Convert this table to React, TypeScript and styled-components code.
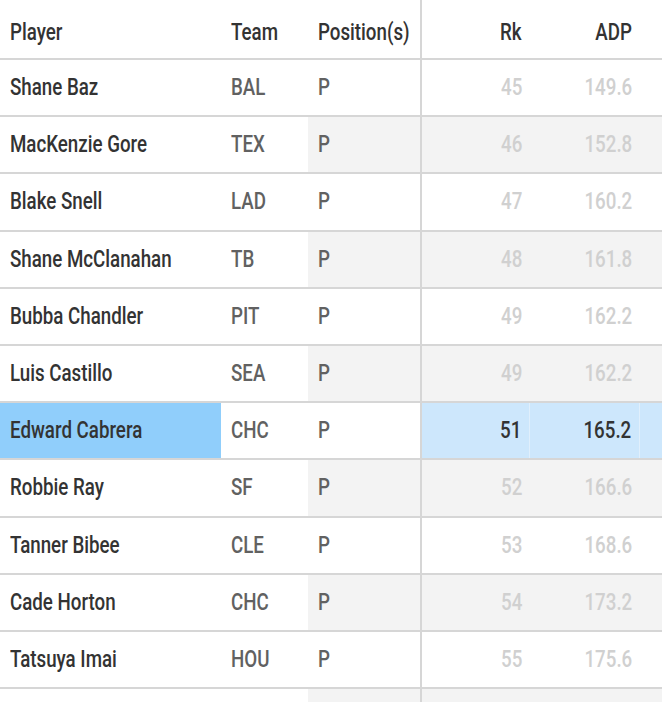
import React, {FC} from 'react';
import styled, {createGlobalStyle} from 'styled-components';

const GlobalStyle = createGlobalStyle`
  html, body {
    margin: 0;
    padding: 0;
    background: #ffffff;
  }

  body {
    font-family: "Roboto", "Liberation Sans", sans-serif;
    overflow: hidden;
  }
`

const COLUMNS = '221px 87px 112px 2px 108px 110px 1fr';

const Table = styled.div`
  width: 662px;
  display: flex;
  flex-direction: column;
`

const HeaderRow = styled.div`
  display: grid;
  grid-template-columns: ${COLUMNS};
  height: 58px;
  border-bottom: 2px solid #d6d6d6;
`

const Row = styled.div`
  display: grid;
  grid-template-columns: ${COLUMNS};
  height: 55.2px;
  border-bottom: 2px solid #d6d6d6;
`

const Cell = styled.div<{ $align?: 'left' | 'right'; $bg?: string; $tone?: 'dark' | 'mid' | 'faint'; $line?: boolean }>`
  display: flex;
  align-items: center;
  justify-content: ${p => p.$align === 'right' ? 'flex-end' : 'flex-start'};
  padding: ${p => p.$align === 'right' ? '0 8px 1px 0' : '0 0 1px 10px'};
  font-size: 24px;
  font-weight: 500;
  background: ${p => p.$bg || 'transparent'};
  color: ${p => p.$tone === 'mid' ? '#616161' : p.$tone === 'faint' ? '#d0d0d0' : '#333333'};
  border-right: ${p => p.$line ? '1px solid #e0effc' : 'none'};
  white-space: nowrap;
`

const HeaderCell = styled(Cell)`
  color: #333333;
  padding-top: 6px;
  padding-bottom: 0;
`

/* the screenshot uses a condensed face; squeeze Roboto to its widths */
const Label = styled.span<{ $align?: 'left' | 'right' }>`
  display: inline-block;
  transform: scaleX(0.78);
  transform-origin: ${p => p.$align === 'right' ? 'right' : 'left'} center;
`

const Divider = styled.div`
  background: #d6d6d6;
`

const TailRow = styled.div`
  display: grid;
  grid-template-columns: ${COLUMNS};
  height: 13px;
`

interface Player {
  name: string;
  team: string;
  rank: number;
  adp: string;
}

const players: Player[] = [
  {name: 'Shane Baz', team: 'BAL', rank: 45, adp: '149.6'},
  {name: 'MacKenzie Gore', team: 'TEX', rank: 46, adp: '152.8'},
  {name: 'Blake Snell', team: 'LAD', rank: 47, adp: '160.2'},
  {name: 'Shane McClanahan', team: 'TB', rank: 48, adp: '161.8'},
  {name: 'Bubba Chandler', team: 'PIT', rank: 49, adp: '162.2'},
  {name: 'Luis Castillo', team: 'SEA', rank: 49, adp: '162.2'},
  {name: 'Edward Cabrera', team: 'CHC', rank: 51, adp: '165.2'},
  {name: 'Robbie Ray', team: 'SF', rank: 52, adp: '166.6'},
  {name: 'Tanner Bibee', team: 'CLE', rank: 53, adp: '168.6'},
  {name: 'Cade Horton', team: 'CHC', rank: 54, adp: '173.2'},
  {name: 'Tatsuya Imai', team: 'HOU', rank: 55, adp: '175.6'},
];

const SELECTED = 'Edward Cabrera';
const STRIPE = '#f3f3f3';

const PlayerRow: FC<{ player: Player; index: number }> = ({player, index}) => {
  const selected = player.name === SELECTED;
  const stripe = index % 2 === 1 ? STRIPE : undefined;
  const right = selected ? '#cde7fc' : stripe;
  const tone = selected ? 'dark' : 'faint';

  return (
    <Row>
      <Cell $bg={selected ? '#90cefb' : undefined}><Label>{player.name}</Label></Cell>
      <Cell $tone="mid"><Label>{player.team}</Label></Cell>
      <Cell $tone="mid" $bg={stripe}><Label>P</Label></Cell>
      <Divider/>
      <Cell $align="right" $bg={right} $tone={tone} $line={selected}>
        <Label $align="right">{player.rank}</Label>
      </Cell>
      <Cell $align="right" $bg={right} $tone={tone} $line={selected}>
        <Label $align="right">{player.adp}</Label>
      </Cell>
      <Cell $bg={right}/>
    </Row>
  );
};

const App: FC = () => (
  <>
    <GlobalStyle/>
    <Table>
      <HeaderRow>
        <HeaderCell><Label>Player</Label></HeaderCell>
        <HeaderCell><Label>Team</Label></HeaderCell>
        <HeaderCell><Label>Position(s)</Label></HeaderCell>
        <Divider/>
        <HeaderCell $align="right"><Label $align="right">Rk</Label></HeaderCell>
        <HeaderCell $align="right"><Label $align="right">ADP</Label></HeaderCell>
        <HeaderCell/>
      </HeaderRow>
      {players.map((p, i) => <PlayerRow key={p.name} player={p} index={i}/>)}
      <TailRow>
        <div/>
        <div/>
        <Cell $bg={STRIPE}/>
        <Divider/>
        <Cell $bg={STRIPE}/>
        <Cell $bg={STRIPE}/>
        <Cell $bg={STRIPE}/>
      </TailRow>
    </Table>
  </>
);

export default App;
